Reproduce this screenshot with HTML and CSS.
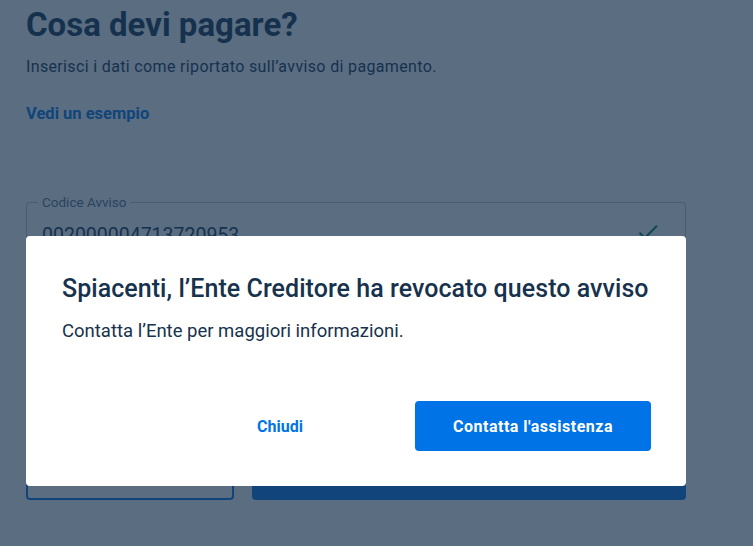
FILE: index.html
```html
<!DOCTYPE html>
<html lang="it">

<head>
  <meta charset="UTF-8" />
  <meta name="viewport" content="width=device-width, initial-scale=1.0" />
  <title>Cosa devi pagare?</title>
  <link rel="stylesheet" href="styles.css">
</head>

<body>
  <div class="page">
    <h1>Cosa devi pagare?</h1>
    <p class="lead">Inserisci i dati come riportato sull’avviso di pagamento.</p>
    <a class="example-link" href="#">Vedi un esempio</a>

    <fieldset class="field">
      <legend>Codice Avviso</legend>
      <div class="field-row">
        <span class="field-value">002000004713720953</span>
        <svg class="check" viewBox="0 0 24 24" width="26" height="26">
          <path d="M9 16.17 4.83 12l-1.42 1.41L9 19 21 7l-1.41-1.41z" fill="#008758" />
        </svg>
      </div>
    </fieldset>

    <div class="actions">
      <button class="btn-outline"></button>
      <button class="btn-fill"></button>
    </div>
  </div>

  <!-- dialog over the page -->
  <div class="backdrop">
    <div class="dialog">
      <h2>Spiacenti, l’Ente Creditore ha revocato questo avviso</h2>
      <p>Contatta l’Ente per maggiori informazioni.</p>
      <div class="dialog-actions">
        <button class="btn-text">Chiudi</button>
        <button class="btn-primary">Contatta l'assistenza</button>
      </div>
    </div>
  </div>
</body>

</html>
```

FILE: styles.css
```css
* {
  box-sizing: border-box;
}

body {
  margin: 0;
  font-family: Roboto, "Liberation Sans", sans-serif;
  background: #fff;
  color: #17324d;
  overflow: hidden;
}

.page {
  width: 712px;
  padding: 5px 0 0 26px;
}

h1 {
  margin: 0;
  font-size: 33px;
  line-height: 40px;
  font-weight: 700;
  color: #17324d;
}

.lead {
  margin: 10px 0 0;
  font-size: 16px;
  line-height: 24px;
  font-weight: 400;
  letter-spacing: 0.35px;
}

.example-link {
  display: block;
  margin-top: 23px;
  font-size: 16.5px;
  line-height: 24px;
  font-weight: 700;
  color: #0073e6;
  text-decoration: none;
}

.field {
  margin: 68px 0 0;
  padding: 0 11px;
  width: 660px;
  height: 64px;
  border: 1px solid #c4c4c4;
  border-radius: 4px;
}

.field legend {
  padding: 0 4px;
  font-size: 13.5px;
  line-height: 16px;
  color: #5c6f82;
}

.field-row {
  display: flex;
  align-items: center;
  justify-content: space-between;
  padding: 12px 13px 0 4px;
}

.field-value {
  font-size: 19.5px;
  line-height: 28px;
}

.check {
  margin-top: -8px;
}

.actions {
  display: flex;
  gap: 18px;
  width: 660px;
  margin-top: 194px;
}

.actions button {
  height: 48px;
  border-radius: 4px;
}

.btn-outline {
  width: 208px;
  background: #fff;
  border: 2px solid #0073e6;
}

.btn-fill {
  flex: 1;
  background: #0073e6;
  border: none;
}

/* Dialog */
.backdrop {
  position: fixed;
  inset: 0;
  background: rgba(23, 50, 77, 0.71);
  padding: 236px 0 0 26px;
}

.dialog {
  width: 660px;
  height: 250px;
  background: #fff;
  border-radius: 4px;
  padding: 37px 35px 35px 36px;
  display: flex;
  flex-direction: column;
}

.dialog h2 {
  margin: 0;
  font-size: 25px;
  line-height: 32px;
  font-weight: 500;
  color: #17324d;
  letter-spacing: 0.05px;
}

.dialog p {
  margin: 13px 0 0;
  font-size: 18.5px;
  line-height: 26px;
  color: #17324d;
}

.dialog-actions {
  margin-top: auto;
  display: flex;
  justify-content: flex-end;
  gap: 17px;
}

.dialog-actions button {
  width: 236px;
  height: 50px;
  border: none;
  border-radius: 4px;
  font: 700 16px Roboto, sans-serif;
  cursor: pointer;
}

.btn-text {
  background: transparent;
  color: #0073e6;
}

.btn-primary {
  background: #0073e6;
  color: #fff;
  letter-spacing: 0.5px;
}
```
